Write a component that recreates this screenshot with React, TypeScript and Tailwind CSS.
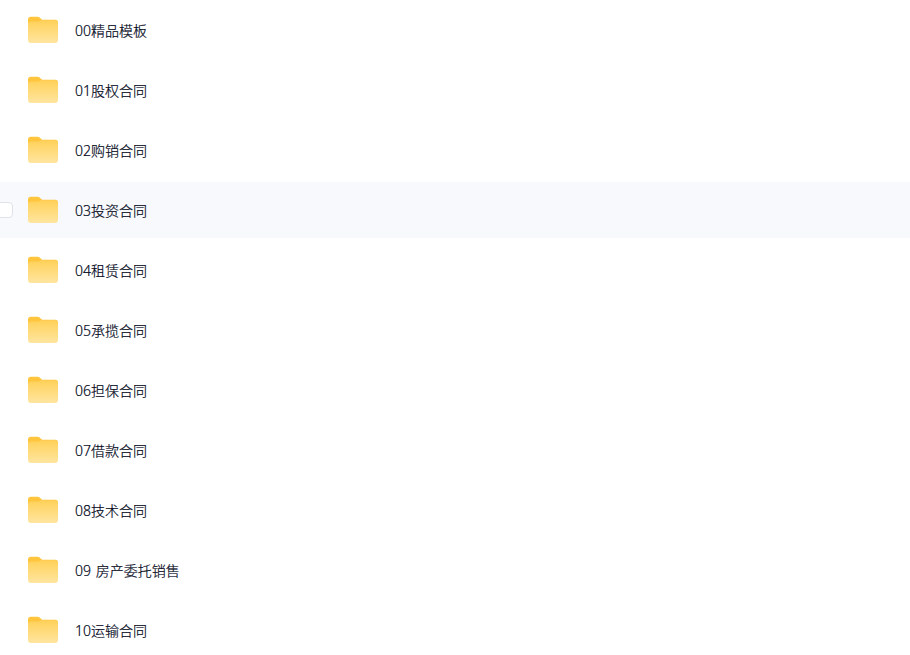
interface FolderItem {
  id: number;
  name: string;
}

const folders: FolderItem[] = [
  { id: 0, name: '00精品模板' },
  { id: 1, name: '01股权合同' },
  { id: 2, name: '02购销合同' },
  { id: 3, name: '03投资合同' },
  { id: 4, name: '04租赁合同' },
  { id: 5, name: '05承揽合同' },
  { id: 6, name: '06担保合同' },
  { id: 7, name: '07借款合同' },
  { id: 8, name: '08技术合同' },
  { id: 9, name: '09 房产委托销售' },
  { id: 10, name: '10运输合同' },
];

function FolderIcon() {
  return (
    <svg className="w-[30px] h-[26px] flex-shrink-0 overflow-visible" viewBox="0 0 30 26" fill="none">
      <defs>
        <linearGradient id="folder-front" x1="15" y1="3" x2="15" y2="26" gradientUnits="userSpaceOnUse">
          <stop stopColor="#ffcf58" />
          <stop offset="0.2" stopColor="#ffd566" />
          <stop offset="1" stopColor="#ffe5a0" />
        </linearGradient>
      </defs>
      <path d="M0 2.700A3 3 0 0 1 3-.3H9.500c.8 0 1.500.3 2.100.8l1.900 1.700c.4.400.9.600 1.500.600H27a3 3 0 0 1 3 3V12H0V2.700Z" fill="#ffc53d" />
      <path d="M0 7a2.500 2.500 0 0 1 2.500-2.500H9c.9 0 1.700-.2 2.500-.6l.6-.3c.5-.2 1-.3 1.500-.3H27a3 3 0 0 1 3 3V23a3 3 0 0 1-3 3H3a3 3 0 0 1-3-3V7Z" fill="url(#folder-front)" />
    </svg>
  );
}

interface FolderRowProps {
  folder: FolderItem;
  isHovered: boolean;
}

function FolderRow({ folder, isHovered }: FolderRowProps) {
  return (
    <li className={`flex items-center h-14 mb-1 ${isHovered ? 'bg-[#f7f9fc]' : ''}`}>
      <div className="w-7 flex-shrink-0">
        {isHovered && (
          <div className="-ml-[3px] w-4 h-4 rounded-[4px] border border-[#dfe2e8] bg-white" />
        )}
      </div>
      <FolderIcon />
      <span className="ml-[17px] pt-[2px] text-[14px] leading-5 font-light text-[#03081a] [word-spacing:1px] [-webkit-text-stroke:0.2px_#03081a]">
        {folder.name}
      </span>
    </li>
  );
}

export default function App() {
  const [hoveredId] = [3];

  return (
    <main className="w-full h-[655px] overflow-hidden bg-white pt-[2px] font-['Noto_Sans','Noto_Sans_CJK_SC',sans-serif]">
      <ul>
        {folders.map((folder) => (
          <FolderRow key={folder.id} folder={folder} isHovered={folder.id === hoveredId} />
        ))}
      </ul>
    </main>
  );
}
